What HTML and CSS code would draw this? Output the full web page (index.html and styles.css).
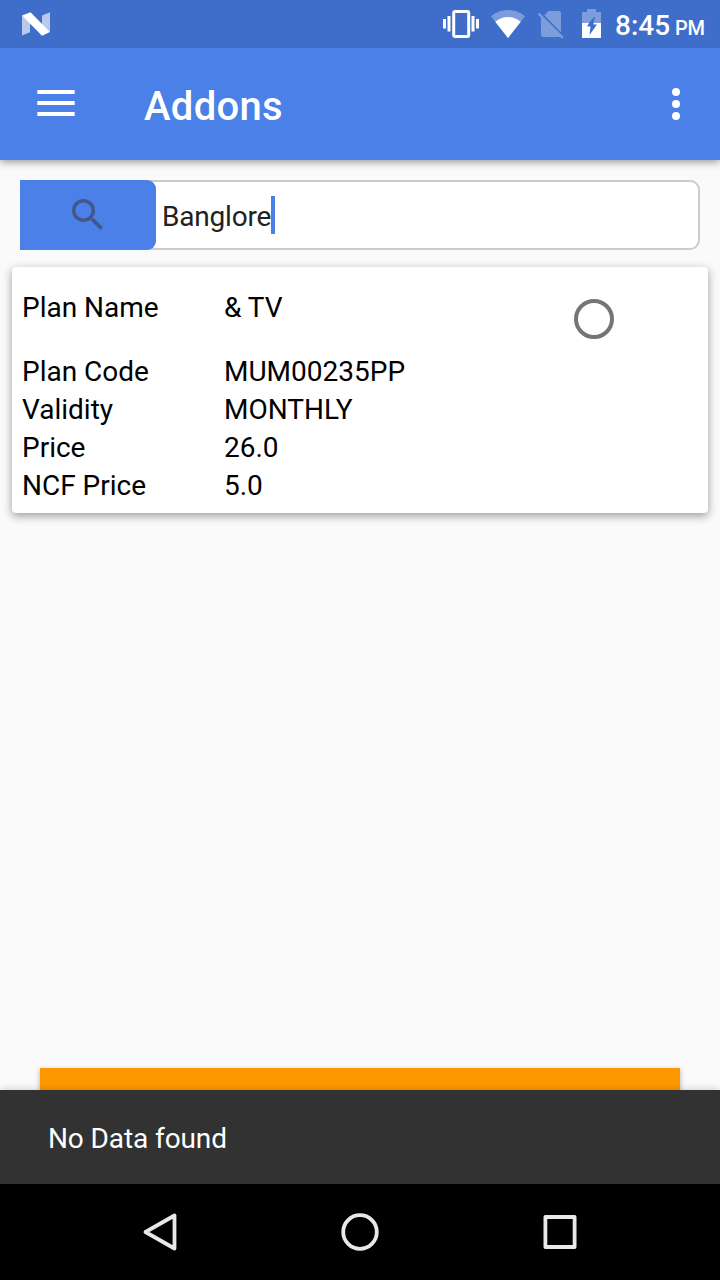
FILE: index.html
```
<!DOCTYPE html>
<html lang="en">
<head>
<meta charset="utf-8">
<title>Addons</title>
<link rel="stylesheet" href="styles.css">
</head>
<body>
<div class="screen">
  <header class="status-bar">
    <svg class="status-logo" width="28" height="24" viewBox="22 12 28 24">
      <path d="M22 15.5 30 21V32.200L22 35.500ZM42 15.500 50 12.300V32L42 26Z" fill="#fff" fill-opacity=".63"/>
      <path d="M22 15.500 30.500 12.200 50 32 42 35.700Z" fill="#fff"/>
    </svg>
    <svg class="status-icons" width="160" height="32" viewBox="443 8 160 32">
      <rect x="453.700" y="11.500" width="15" height="25" rx="1.500" fill="none" stroke="#fff" stroke-width="3"/>
      <path d="M443 19h3v9.500h-3zM447.500 16h3v15.500h-3zM471.500 16h3v15.500h-3zM476 19h3v9.500h-3z" fill="#fff"/>
      <path d="M508 38 491 16.300Q498.500 10 508 10T525 16.300Z" fill="#fff" fill-opacity=".32"/>
      <path d="M508 38 495.300 21.700Q501 17 508 17T520.700 21.700Z" fill="#fff"/>
      <g fill="#fff" fill-opacity=".32">
        <path d="M548.500 11H558.500Q561 11 561 13.500V32.200L544.400 15.600Z"/>
        <path d="M539.400 12.800 563.700 37 562 38.700 560.300 37H543.500Q541 37 541 34.500V17.800L537.700 14.500Z"/>
        <path d="M582 12H587V9H596V12H601V23H593.500L595 16.500H594.500L589 23H582Z"/>
      </g>
      <path fill-rule="evenodd" d="M582 23H601V38H582ZM589 23 587 26.500H590.500L589.500 35 597 24.500H593.500V23Z" fill="#fff"/>
    </svg>
    <div class="clock">8:45 <span class="meridiem">PM</span></div>
  </header>
  <div class="app-bar">
    <svg class="menu-icon" width="38" height="27" viewBox="0 0 38 27"><path d="M.300 0h37.400v4H.300zM.300 11h37.400v4H.300zM.300 22h37.400v4H.300z" fill="#fff"/></svg>
    <h1 class="title">Addons</h1>
    <svg class="more-icon" width="8" height="32" viewBox="0 0 8 32" fill="#fff"><circle cx="4" cy="4" r="4"/><circle cx="4" cy="16" r="4"/><circle cx="4" cy="28" r="4"/></svg>
  </div>
  <main class="content">
    <div class="search">
      <div class="search-button">
        <svg width="31" height="31" viewBox="3 3 17.490 17.490"><path fill="#445789" d="M15.500 14h-.790l-.280-.270C15.410 12.590 16 11.110 16 9.500 16 5.910 13.090 3 9.500 3S3 5.910 3 9.500 5.910 16 9.500 16c1.610 0 3.090-.590 4.230-1.570l.270.280v.790l5 4.990L20.490 19l-4.990-5zm-6 0C7.010 14 5 11.990 5 9.500S7.010 5 9.500 5 14 7.010 14 9.500 11.990 14 9.500 14z"/></svg>
      </div>
      <span class="query">Banglore</span><span class="caret"></span>
    </div>
    <section class="card">
      <div class="row row-name"><span class="label">Plan Name</span><span>&amp; TV</span><span class="radio"></span></div>
      <div class="row"><span class="label">Plan Code</span><span>MUM00235PP</span></div>
      <div class="row"><span class="label">Validity</span><span>MONTHLY</span></div>
      <div class="row"><span class="label">Price</span><span>26.0</span></div>
      <div class="row"><span class="label">NCF Price</span><span>5.0</span></div>
    </section>
    <div class="action"></div>
  </main>
  <div class="snackbar">No Data found</div>
  <nav class="nav-bar">
    <svg width="40" height="40" viewBox="0 0 40 40"><path d="M5.500 20 34.500 3.500V36.500Z"/></svg>
    <svg width="40" height="40" viewBox="0 0 40 40"><circle cx="20" cy="20" r="16.800"/></svg>
    <svg width="40" height="40" viewBox="0 0 40 40"><rect x="5.400" y="5" width="29.200" height="30"/></svg>
  </nav>
</div>
</body>
</html>
```

FILE: styles.css
```
* { box-sizing: border-box; }
body { margin: 0; font-family: Roboto, sans-serif; font-size: 28px; color: #000; }
.screen { width: 720px; height: 1280px; display: flex; flex-direction: column; background: #fafafa; overflow: hidden; }
.status-bar { position: relative; z-index: 2; height: 48px; flex: none; display: flex; align-items: center; padding: 0 0 0 22px; background: #3f6eca; color: #fff; }
.status-icons { margin-left: auto; }
.clock { width: 105px; margin-left: 12px; padding-top: 6px; font-size: 28px; line-height: 36px; font-weight: 500; white-space: nowrap; }
.meridiem { font-size: 20px; margin-left: -2px; letter-spacing: -.3px; }
.app-bar { height: 112px; flex: none; display: flex; align-items: center; padding: 0 40px 0 37px; background: #4a80e8; color: #fff; box-shadow: 0 2px 8px rgba(0, 0, 0, .4); z-index: 1; }
.menu-icon { margin-top: -1px; }
.title { margin: 6px auto 0 69px; font-size: 40px; font-weight: 500; line-height: 48px; letter-spacing: .3px; }
.content { flex: 1; display: flex; flex-direction: column; padding-top: 20px; }
.search { height: 70px; margin: 0 20px; display: flex; align-items: center; background: #fff; border: 2px solid #ccc; border-radius: 10px; }
.search-button { width: 136px; height: 70px; flex: none; display: flex; align-items: center; justify-content: center; margin-left: -2px; padding: 0 2px 2px 0; background: #4a80e8; border-radius: 0 9px 9px 0; }
.query { margin: 3px 0 0 6px; color: #212121; letter-spacing: -.2px; }
.caret { width: 4px; height: 38px; background: #4a80e8; }
.card { height: 246px; margin: 17px 12px 0; padding: 22px 10px 0; background: #fff; border-radius: 4px; box-shadow: 0 3px 10px rgba(0, 0, 0, .38); line-height: 38px; }
.row { display: flex; height: 38px; }
.row-name { height: 64px; }
.label { width: 202px; }
.radio { width: 40px; height: 40px; margin: 10px 84px 0 auto; border: 4px solid #757575; border-radius: 50%; }
.action { height: 22px; margin: auto 40px 0; background: #ff9800; box-shadow: 0 2px 5px rgba(0, 0, 0, .3); }
.snackbar { height: 94px; flex: none; padding: 3px 48px 0; line-height: 92px; letter-spacing: -.1px; background: #323232; color: #fff; box-shadow: 0 0 8px rgba(0, 0, 0, .2); z-index: 1; }
.nav-bar { height: 96px; flex: none; display: flex; justify-content: space-between; align-items: center; padding: 0 140px; background: #000; fill: none; stroke: #e8e8e8; stroke-width: 3.8; stroke-linejoin: round; z-index: 2; }
```
